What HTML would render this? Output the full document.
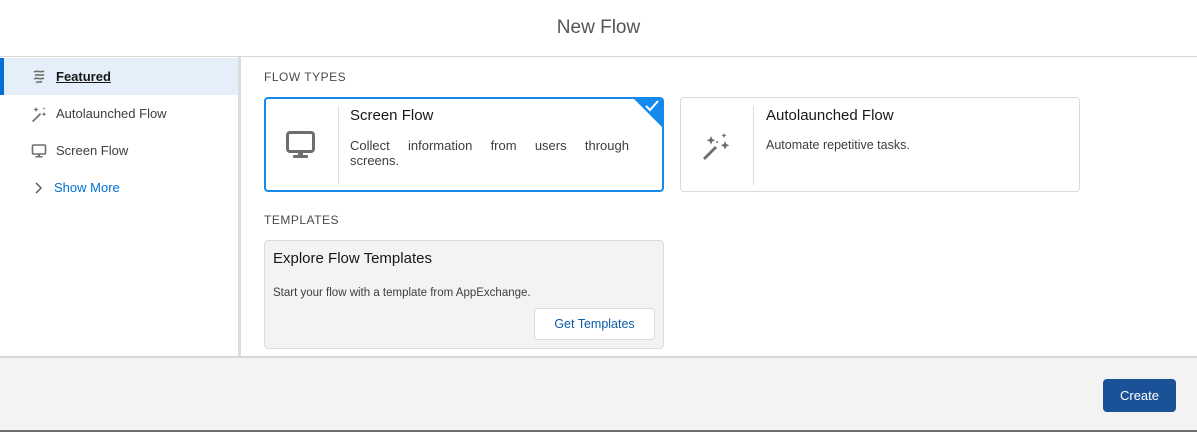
<!DOCTYPE html>
<html><head><style>
*{box-sizing:border-box;margin:0;padding:0}
body{width:1197px;height:432px;background:#fff;font-family:"Liberation Sans",sans-serif;color:#3e3e3c;position:relative;overflow:hidden;font-size:13px}
.abs{position:absolute}
.hdr{left:0;top:0;width:1197px;height:57px;border-bottom:1px solid #d8d8d8;text-align:center;font-size:19px;line-height:56px;color:#555}
.side{left:0;top:57px;width:241px;height:300px;border-right:3px solid #dcdcdc}
.nav{position:absolute;left:0;width:238px;height:37px;line-height:37px;padding-left:56px;font-size:13px;color:#3e3e3c}
.nav svg{position:absolute;left:31px;top:11px}
.lab{font-size:12px;letter-spacing:.5px;color:#4a4a4a}
.card{border-radius:4px;background:#fff}
.foot{left:0;top:356px;width:1197px;height:76px;background:#f3f3f3;border-top:2px solid #d8d8d8;border-bottom:2px solid #706e6b}
</style></head><body>
<div class="abs hdr">New Flow</div>
<div class="abs side">
 <div class="nav" style="top:1px;background:#e5eff9;border-left:4px solid #0070d2;padding-left:52px;font-weight:bold;color:#181818"><svg style="left:27px" width="16" height="16" viewBox="0 0 16 16" fill="none" stroke="#706e6b" stroke-width="1.6"><path d="M3 3c3-2 6 1 10-1M4 6.5c3-2 6 1 9-1M3 10c3-2 6 1 10-1M5 13.5c2-1 4 0 6-1"/></svg><span style="text-decoration:underline">Featured</span></div>
 <div class="nav" style="top:38px"><svg width="16" height="16" viewBox="0 0 16 16" fill="#706e6b"><path d="M1 15l8-8 1.2 1.2-8 8z"/><path d="M5 1l.8 1.8L7.6 3.5 5.8 4.3 5 6 4.2 4.3 2.4 3.5 4.2 2.8z"/><path d="M13 6l.7 1.5 1.5.7-1.5.7L13 10.5l-.7-1.6-1.5-.7 1.5-.7z"/><path d="M13 1l.4 1 1 .4-1 .4-.4 1-.4-1-1-.4 1-.4z"/></svg>Autolaunched Flow</div>
 <div class="nav" style="top:75px"><svg width="16" height="16" viewBox="0 0 16 16"><rect x="1.5" y="2" width="13" height="9" rx="1" fill="none" stroke="#706e6b" stroke-width="1.6"/><rect x="7" y="11" width="2" height="2" fill="#706e6b"/><rect x="4.5" y="13" width="7" height="1.5" fill="#706e6b"/></svg>Screen Flow</div>
 <div class="nav" style="top:112px;color:#0070d2;padding-left:54px"><svg width="12" height="16" viewBox="0 0 12 16" style="left:33px"><path d="M3 3l5 5-5 5" fill="none" stroke="#555" stroke-width="1.4"/></svg>Show More</div>
</div>
<div class="abs lab" style="left:264px;top:70px">FLOW TYPES</div>
<div class="abs card" style="left:264px;top:97px;width:400px;height:95px;border:2px solid #1589ee;overflow:hidden">
 <div class="abs" style="right:-1px;top:-1px;width:0;height:0;border-top:30px solid #1589ee;border-left:30px solid transparent"></div>
 <svg class="abs" style="right:3px;top:1px" width="14" height="12" viewBox="0 0 14 12"><path d="M1 6l4 4 8-9" fill="none" stroke="#fff" stroke-width="2"/></svg>
 <svg class="abs" style="left:20px;top:32px" width="30" height="30" viewBox="0 0 30 30"><rect x="1.5" y="1.5" width="26" height="19" rx="2.5" fill="none" stroke="#706e6b" stroke-width="3"/><rect x="12" y="21" width="5" height="3" fill="#706e6b"/><rect x="7" y="24" width="15" height="3" rx="1" fill="#706e6b"/></svg>
 <div class="abs" style="left:72px;top:7px;width:1px;height:79px;background:#ddd"></div>
 <div class="abs" style="left:84px;top:8px;font-size:15px;color:#181818">Screen Flow</div>
 <div class="abs" style="left:84px;top:39px;width:279px;font-size:13px;line-height:15px;color:#3e3e3c"><div style="display:flex;justify-content:space-between"><span>Collect</span><span>information</span><span>from</span><span>users</span><span>through</span></div><div>screens.</div></div>
</div>
<div class="abs card" style="left:680px;top:97px;width:400px;height:95px;border:1px solid #dddbda">
 <svg class="abs" style="left:20px;top:32px" width="32" height="32" viewBox="0 0 32 32" fill="#706e6b"><path d="M2 28l12-12 2 2-12 12z"/><path d="M10 6l1.3 3 3 1.2-3 1.3L10 14.5 8.7 11.5 5.7 10.2l3-1.2z"/><path d="M24 11l1.3 3 3 1.3-3 1.3L24 19.5l-1.3-2.9-3-1.3 3-1.3z"/><path d="M23 3l.8 1.7 1.7.8-1.7.8L23 8l-.8-1.7-1.7-.8 1.7-.8z"/><circle cx="16" cy="12" r="1"/></svg>
 <div class="abs" style="left:72px;top:8px;width:1px;height:79px;background:#ddd"></div>
 <div class="abs" style="left:85px;top:9px;font-size:15px;color:#181818">Autolaunched Flow</div>
 <div class="abs" style="left:85px;top:40px;font-size:12.5px;color:#3e3e3c">Automate repetitive tasks.</div>
</div>
<div class="abs lab" style="left:264px;top:213px">TEMPLATES</div>
<div class="abs" style="left:264px;top:240px;width:400px;height:109px;background:#f3f3f3;border:1px solid #dddbda;border-radius:4px">
 <div class="abs" style="left:8px;top:9px;font-size:15px;color:#181818">Explore Flow Templates</div>
 <div class="abs" style="left:8px;top:46px;font-size:11.5px;color:#3e3e3c">Start your flow with a template from AppExchange.</div>
 <div class="abs" style="left:269px;top:67px;width:121px;height:32px;background:#fff;border:1px solid #dddbda;border-radius:4px;text-align:center;line-height:30px;font-size:12.5px;color:#0b5cab">Get Templates</div>
</div>
<div class="abs foot"><div class="abs" style="left:1103px;top:21px;width:73px;height:33px;background:#1b5297;border-radius:4px;color:#fff;text-align:center;line-height:33px;font-size:13px">Create</div></div>
</body></html>
